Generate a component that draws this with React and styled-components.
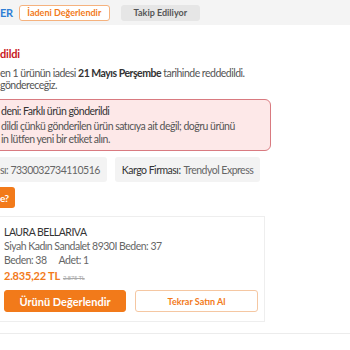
import styled, { createGlobalStyle } from "styled-components";

const Global = createGlobalStyle`
    body {
        margin: 0;
        background: #fff;
        font-family: Lato, "Open Sans", sans-serif;
        overflow: hidden;
    }
`;

const Page = styled.div`
    width: 350px;
    height: 350px;
    overflow: hidden;
`;

const TopBar = styled.div`
    height: 25px;
    background-color: #f4f4f4;
    display: flex;
    align-items: center;
`;

const Kod = styled.span`
    color: #2f7fd6;
    font-weight: bold;
    font-size: 11px;
    letter-spacing: -0.3px;
    margin-right: 6px;
    white-space: nowrap;
`;

const TopBtn = styled.div`
    height: 16px;
    box-sizing: border-box;
    width: ${props => props.gri ? '79px' : '91px'};
    margin-left: ${props => props.gri ? '11px' : '0'};
    display: flex;
    justify-content: center;
    align-items: center;
    white-space: nowrap;
    border-radius: 3px;
    font-size: 9px;
    font-weight: bold;
    color: ${props => props.gri ? '#555' : '#f27a1a'};
    background-color: ${props => props.gri ? '#e6e6e6' : '#fff'};
    border: 1px solid ${props => props.gri ? '#e6e6e6' : '#f5b27e'};
`;

const Icerik = styled.div`
    margin-left: -12px;
    display: flex;
    flex-direction: column;
    align-items: flex-start;
    letter-spacing: -0.5px;
`;

const Baslik = styled.p`
    margin: 22px 0 0 12px;
    color: #c8161d;
    font-weight: bold;
    font-size: 11px;
    line-height: 14px;
    letter-spacing: -0.2px;
`;

const Aciklama = styled.p`
    margin: 6px 0 0 12px;
    color: #555;
    font-size: 10.5px;
    line-height: 12px;

    b { color: #333; }
`;

const RedKutu = styled.div`
    margin-top: 8px;
    width: 283px;
    height: 52px;
    box-sizing: border-box;
    padding: 5px 0 0 12px;
    background-color: #fde8e8;
    border: 1px solid #d97a80;
    border-radius: 6px;
    font-size: 10.5px;
    color: #555;
    line-height: 13px;
`;

const RedSebep = styled.div`
    color: #333;
    margin-bottom: 2px;
`;

const KargoSatir = styled.div`
    margin-top: 6px;
    display: flex;
    gap: 8px;
`;

const KargoKutu = styled.div`
    height: 25px;
    box-sizing: border-box;
    padding: ${props => props.ilk ? '0 7px 0 12px' : '0 7px'};
    background-color: #f3f3f3;
    border-radius: 3px;
    display: flex;
    align-items: center;
    gap: 3px;
    font-size: 10.5px;
    color: #666;

    span { color: #333; }
`;

const SoruBtn = styled.div`
    margin-top: 5px;
    height: 21px;
    box-sizing: border-box;
    padding: 0 6px 0 12px;
    background-color: #f27a1a;
    border-radius: 3px;
    display: flex;
    align-items: center;
    color: #fff;
    font-weight: bold;
    font-size: 10px;
`;

const UrunKart = styled.div`
    margin-top: 8px;
    width: 277px;
    box-sizing: border-box;
    padding: 8px 0 9px 15px;
    border: 1px solid #eeeeee;
`;

const Marka = styled.div`
    font-size: 10.5px;
    color: #333;
    line-height: 14px;
`;

const UrunBilgi = styled.div`
    font-size: 10.5px;
    color: #666;
    line-height: 14px;
    display: flex;
    gap: 12px;
`;

const Fiyat = styled.div`
    margin-top: 2px;
    display: flex;
    align-items: baseline;
    gap: 3px;
    color: #f27a1a;
    font-weight: bold;
    font-size: 11px;
    line-height: 14px;
    letter-spacing: -0.2px;

    s {
        color: #aaa;
        font-weight: normal;
        font-size: 6px;
    }
`;

const Butonlar = styled.div`
    margin-top: 5px;
    display: flex;
    gap: 9px;
`;

const KartBtn = styled.div`
    width: ${props => props.dolu ? '122px' : '123px'};
    height: 22px;
    box-sizing: border-box;
    display: flex;
    justify-content: center;
    align-items: center;
    border-radius: 3px;
    letter-spacing: 0;
    font-weight: bold;
    font-size: ${props => props.dolu ? '11px' : '9px'};
    color: ${props => props.dolu ? '#fff' : '#f27a1a'};
    background-color: ${props => props.dolu ? '#f27a1a' : '#fff'};
    border: 1px solid ${props => props.dolu ? '#f27a1a' : '#f5c7a2'};
`;

const AltCizgi = styled.div`
    margin-top: 11px;
    height: 1px;
    background-color: #ececec;
    width: 350px;
`;

export default function App() {
    return (
        <Page>
            <Global />
            <TopBar>
                <Kod>ER</Kod>
                <TopBtn>İadeni Değerlendir</TopBtn>
                <TopBtn gri>Takip Ediliyor</TopBtn>
            </TopBar>
            <Icerik>
                <Baslik>dildi</Baslik>
                <Aciklama>
                    en 1 ürünün iadesi <b>21 Mayıs Perşembe</b> tarihinde reddedildi.<br />
                    göndereceğiz.
                </Aciklama>
                <RedKutu>
                    <RedSebep>deni: Farklı ürün gönderildi</RedSebep>
                    dildi çünkü gönderilen ürün satıcıya ait değil; doğru ürünü<br />
                    in lütfen yeni bir etiket alın.
                </RedKutu>
                <KargoSatir>
                    <KargoKutu ilk>sı: 7330032734110516</KargoKutu>
                    <KargoKutu><span>Kargo Firması:</span> Trendyol Express</KargoKutu>
                </KargoSatir>
                <SoruBtn>e?</SoruBtn>
                <UrunKart>
                    <Marka>LAURA BELLARIVA</Marka>
                    <UrunBilgi>Siyah Kadın Sandalet 8930I Beden: 37</UrunBilgi>
                    <UrunBilgi><span>Beden: 38</span><span>Adet: 1</span></UrunBilgi>
                    <Fiyat>2.835,22 TL <s>2.875 TL</s></Fiyat>
                    <Butonlar>
                        <KartBtn dolu>Ürünü Değerlendir</KartBtn>
                        <KartBtn>Tekrar Satın Al</KartBtn>
                    </Butonlar>
                </UrunKart>
            </Icerik>
            <AltCizgi />
        </Page>
    );
}
